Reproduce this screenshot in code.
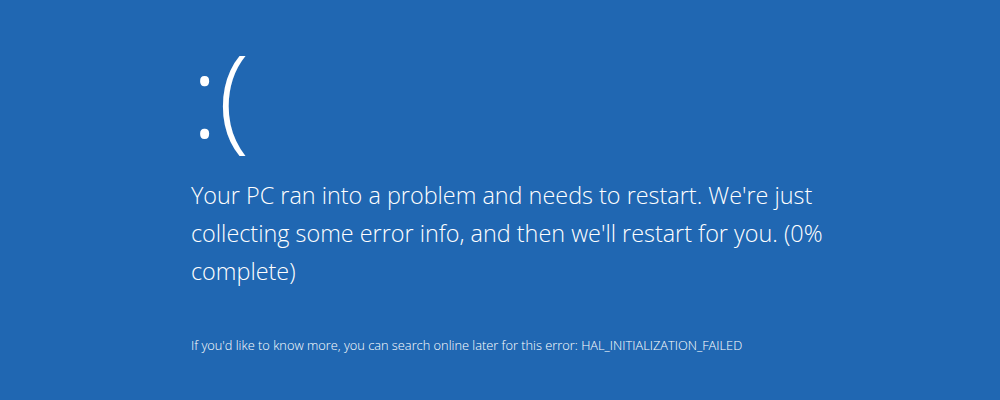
import React from "react";

export default function App() {
  return (
    <div
      className="w-[1000px] h-[400px] bg-[#2067b2] text-white overflow-hidden"
      style={{ fontFamily: '"Open Sans", "Noto Sans", sans-serif' }}
    >
      <div className="pl-[191px] pt-[29px]">
        <div className="text-[114px] leading-[130px] font-light">:(</div>
        <p className="mt-[17px] w-[660px] text-[23.4px] leading-[38px] font-light">
          Your PC ran into a problem and needs to restart. We're just
          collecting some error info, and then we'll restart for you. (0%
          complete)
        </p>
        <p className="mt-[46px] text-[12.8px] leading-[19px] font-light">
          If you'd like to know more, you can search online later for this error: HAL_INITIALIZATION_FAILED
        </p>
      </div>
    </div>
  );
}
